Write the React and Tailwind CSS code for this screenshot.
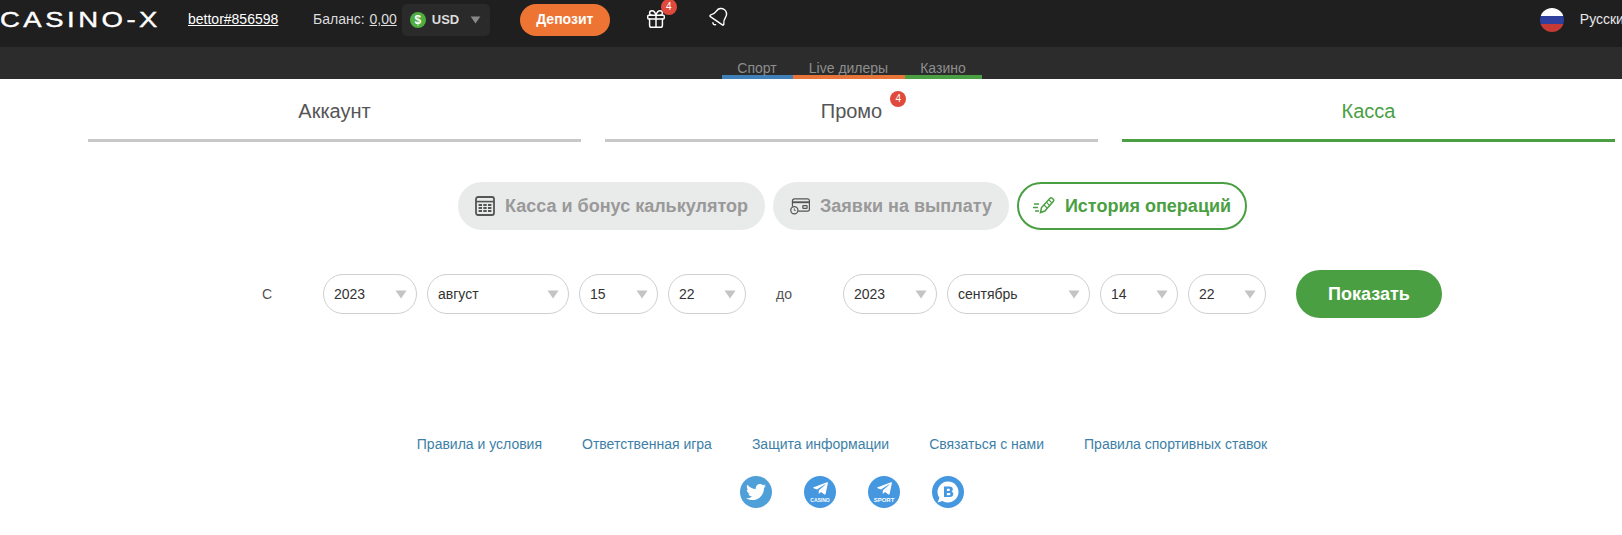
import React from 'react';
import { Gift, Bell } from 'lucide-react';
import { FaTwitter, FaTelegramPlane } from 'react-icons/fa';

const Triangle = ({ className }) => (
  <svg viewBox="0 0 12 9" className={className}>
    <path d="M0.5 0.5h11L6 8.5z" fill="currentColor" />
  </svg>
);

const CalcIcon = () => (
  <svg viewBox="0 0 20 20" className="w-5 h-5 text-[#555]" fill="none" stroke="currentColor">
    <rect x="1" y="1" width="18" height="18" rx="2" strokeWidth="1.8" />
    <path d="M1 5.6h18" strokeWidth="1.6" />
    <path d="M3.6 9h12.8M3.6 12h12.8M3.6 15h12.8" strokeWidth="2" strokeDasharray="3.4 1.3" />
  </svg>
);

const CardIcon = () => (
  <svg viewBox="0 0 21 18" className="w-5 h-[17px] text-[#555]" fill="none" stroke="currentColor" strokeWidth="1.3">
    <path d="M2.5 9V3a2 2 0 0 1 2-2h14a2 2 0 0 1 2 2v9a2 2 0 0 1-2 2H8.5" />
    <path d="M2.5 4.5h18" strokeWidth="2" />
    <rect x="13.5" y="8" width="4.5" height="3" rx="0.6" />
    <circle cx="4.5" cy="13" r="3.8" />
    <path d="M4.5 11v2.2h1.6" strokeWidth="0.9" />
  </svg>
);

const PencilIcon = () => (
  <svg viewBox="0 0 22 20" className="w-[22px] h-5 text-[#4a9f42]" fill="none" stroke="currentColor" strokeWidth="1.5">
    <path d="M7.5 16.5l1-5L17 2.3a1.6 1.6 0 0 1 2.2 0l1 1a1.6 1.6 0 0 1 0 2.2L11.8 15z" />
    <path d="M11 9l3.4 3.4M13.6 6.4l3.4 3.4M16 4l3.2 3.2" strokeWidth="1.2" />
    <path d="M1 8h5M0 11.5h5M2 15h4" strokeWidth="1.6" />
  </svg>
);

const VkIcon = () => (
  <svg viewBox="0 0 32 32" className="w-8 h-8">
    <circle cx="16" cy="16" r="16" fill="#4598e0" />
    <path d="M16 5.5a10.5 10.5 0 1 1-5.6 19.4L5.6 26.5l1.8-4.6A10.5 10.5 0 0 1 16 5.5z" fill="#fff" />
    <path d="M12 10.5h5.6c2 0 3.2 1.1 3.2 2.7 0 1.1-.6 1.9-1.5 2.3 1.2.3 2 1.3 2 2.6 0 1.9-1.4 3-3.5 3H12zm2.9 2.2v2.2h2c.7 0 1.1-.4 1.1-1.1s-.4-1.1-1.1-1.1zm0 4.2v2.4h2.3c.8 0 1.3-.4 1.3-1.2s-.5-1.2-1.3-1.2z" fill="#4598e0" />
  </svg>
);

const DateSelect = ({ value, width }) => (
  <div className={`${width} h-10 rounded-full border border-[#cfcfcf] flex items-center justify-between pl-[10px] pr-[9px] text-[14px] text-[#333]`}>
    <span>{value}</span>
    <Triangle className="w-3 h-[9px] text-[#c4c4c4]" />
  </div>
);

const Tab = ({ children, active, badge }) => (
  <div className={`flex-1 h-[50px] pb-[10px] flex items-center justify-center border-b-[3px] text-[20px] ${active ? 'border-[#4a9f42] text-[#4a9f42]' : 'border-[#c8c8c8] text-[#555]'}`}>
    <span className="relative">
      {children}
      {badge && (
        <span className="absolute -top-[5px] -right-[24px] w-4 h-4 rounded-full bg-[#e04a3c] text-white text-[10px] leading-4 text-center">{badge}</span>
      )}
    </span>
  </div>
);

const Pill = ({ icon, label, active, width }) => (
  <div className={`${width} h-12 rounded-full flex items-center justify-center gap-[10px] text-[18px] font-bold ${active ? 'border-2 border-[#4a9f42] text-[#4a9f42] bg-white' : 'bg-[#e9eaea] text-[#999]'}`}>
    {icon}
    {label}
  </div>
);

const SocialCircle = ({ label, size }) => (
  <div className="w-8 h-8 rounded-full bg-[#4598e0] flex flex-col items-center justify-center text-white">
    <FaTelegramPlane className="w-[17px] h-[17px] -mt-[2px]" />
    <span className={`${size} font-bold leading-[6px]`}>{label}</span>
  </div>
);

export default function App() {
  return (
    <div className="w-[1622px] h-[535px] overflow-hidden bg-white font-['Liberation_Sans',Arial,sans-serif]">
      {/* top bar */}
      <div className="h-[47px] pb-2 bg-[#1f1f1f] flex items-center text-white whitespace-nowrap overflow-hidden">
        <div className="w-[188px] shrink-0 text-[22px] leading-none">
          <span className="inline-block origin-left scale-x-[1.25] tracking-[2.8px] [-webkit-text-stroke:0.4px_white]">CASINO-X</span>
        </div>
        <a className="w-[125px] shrink-0 text-[14px] underline">bettor#856598</a>
        <span className="shrink-0 text-[14px] mr-[5px] text-[#ddd]">Баланс:</span>
        <a className="shrink-0 text-[14px] underline text-[#ddd] mr-[5px]">0,00</a>
        <div className="w-[88px] h-8 shrink-0 rounded-[5px] bg-[#2a2a2a] flex items-center pl-2 text-[13px] font-bold text-[#ddd]">
          <span className="w-4 h-4 rounded-full bg-[#4fae3f] text-white text-[12px] leading-4 text-center mr-[6px]">$</span>
          USD
          <Triangle className="w-[11px] h-2 ml-[11px] text-[#888]" />
        </div>
        <button className="ml-[30px] w-[90px] h-8 shrink-0 rounded-full bg-[#ee7433] text-white text-[14px] font-bold">Депозит</button>
        <div className="relative ml-[35px] -mt-[1px] shrink-0">
          <Gift className="w-[22px] h-[22px]" strokeWidth={1.6} />
          <span className="absolute -top-[9px] -right-[10px] w-4 h-4 rounded-full bg-[#e04a3c] text-white text-[10px] leading-4 text-center">4</span>
        </div>
        <Bell className="ml-[41px] w-[22px] h-[22px] rotate-[35deg] -mt-[5px] shrink-0" strokeWidth={1.6} />
        <div className="w-6 h-6 rounded-full overflow-hidden ml-[810px] flex flex-col shrink-0">
          <div className="h-2 bg-white" />
          <div className="h-2 bg-[#2f3f9e]" />
          <div className="h-2 bg-[#c63a35]" />
        </div>
        <span className="ml-[16px] shrink-0 text-[14px] text-[#e8e8e8]">Русский</span>
      </div>

      {/* sub bar */}
      <div className="h-[32px] bg-[#2c2c2c] flex justify-center items-end pl-[81px] text-[14px] text-[#8e8e8e]">
        <div className="w-[71px] h-[21px] border-b-4 border-[#3f80b8] text-center">Спорт</div>
        <div className="w-[112px] h-[21px] border-b-4 border-[#e9743a] text-center">Live дилеры</div>
        <div className="w-[77px] h-[21px] border-b-4 border-[#4a9f42] text-center">Казино</div>
      </div>

      {/* tabs */}
      <div className="flex gap-6 pl-[88px] pr-[7px] mt-[13px]">
        <Tab>Аккаунт</Tab>
        <Tab badge="4">Промо</Tab>
        <Tab active>Касса</Tab>
      </div>

      {/* cash tabs */}
      <div className="flex justify-center gap-2 mt-[40px] pl-[83px]">
        <Pill width="w-[307px]" icon={<CalcIcon />} label="Касса и бонус калькулятор" />
        <Pill width="w-[236px]" icon={<CardIcon />} label="Заявки на выплату" />
        <Pill width="w-[230px]" active icon={<PencilIcon />} label="История операций" />
      </div>

      {/* date filter */}
      <div className="flex items-center mt-10 pl-[262px] h-12">
        <span className="w-[61px] text-[14px] text-[#555]">С</span>
        <div className="flex gap-[10px]">
          <DateSelect value="2023" width="w-[94px]" />
          <DateSelect value="август" width="w-[142px]" />
          <DateSelect value="15" width="w-[79px]" />
          <DateSelect value="22" width="w-[78px]" />
        </div>
        <span className="w-[97px] pl-[30px] text-[14px] text-[#555]">до</span>
        <div className="flex gap-[10px]">
          <DateSelect value="2023" width="w-[94px]" />
          <DateSelect value="сентябрь" width="w-[143px]" />
          <DateSelect value="14" width="w-[78px]" />
          <DateSelect value="22" width="w-[78px]" />
        </div>
        <button className="ml-[30px] w-[146px] h-12 rounded-full bg-[#4a9f42] text-white text-[18px] font-bold">Показать</button>
      </div>

      {/* footer */}
      <div className="flex justify-center gap-10 mt-[116px] pl-[62px] text-[14px] text-[#3d7fa8]">
        <a>Правила и условия</a>
        <a>Ответственная игра</a>
        <a>Защита информации</a>
        <a>Связаться с нами</a>
        <a>Правила спортивных ставок</a>
      </div>
      <div className="flex justify-center gap-8 mt-[21px] pl-[82px]">
        <div className="w-8 h-8 rounded-full bg-[#4fa0d8] flex items-center justify-center text-white">
          <FaTwitter className="w-5 h-5" />
        </div>
        <SocialCircle label="CASINO" size="text-[5px]" />
        <SocialCircle label="SPORT" size="text-[6px]" />
        <VkIcon />
      </div>
    </div>
  );
}
